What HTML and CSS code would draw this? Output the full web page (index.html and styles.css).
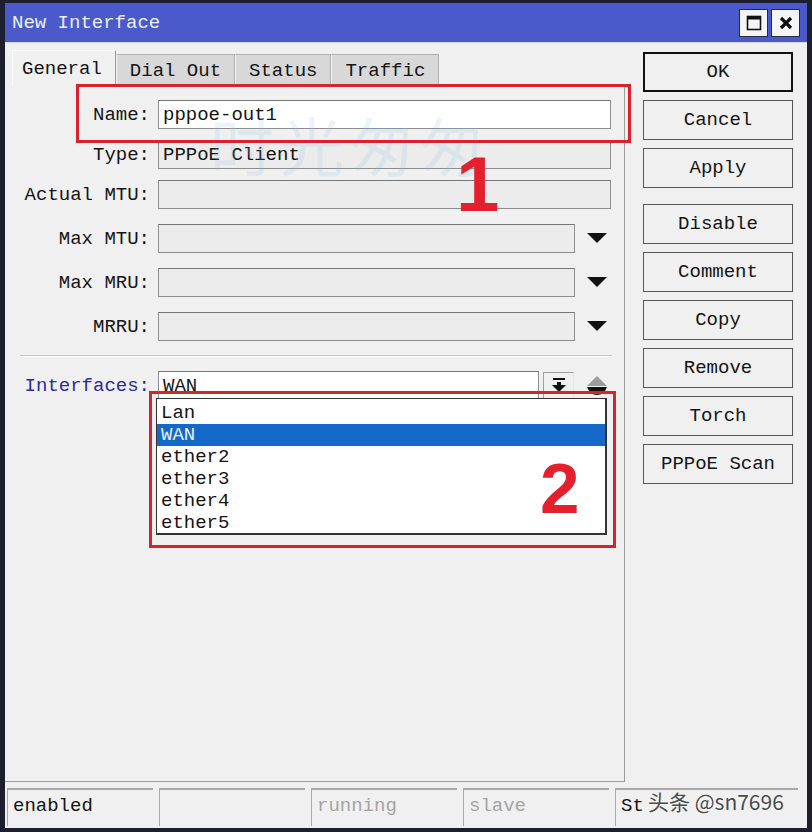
FILE: index.html
```html
<!DOCTYPE html>
<html>
<head>
<meta charset="utf-8">
<link rel="stylesheet" href="styles.css">
</head>
<body>
<div class="window">
  <div class="titlebar">
    <span class="title">New Interface</span>
    <div class="tb-buttons">
      <span class="tb-btn"><svg width="16" height="16" viewBox="0 0 16 16"><rect x="1.5" y="1.5" width="13" height="13" fill="none" stroke="#111" stroke-width="1.6"/><rect x="1" y="1" width="14" height="3.5" fill="#111"/></svg></span>
      <span class="tb-btn"><svg width="16" height="16" viewBox="0 0 16 16"><path d="M3 3 L13 13 M13 3 L3 13" stroke="#111" stroke-width="3.2" fill="none"/></svg></span>
    </div>
  </div>
  <div class="body">
    <div class="main">
      <div class="tabs">
        <div class="tab active">General</div>
        <div class="tab">Dial Out</div>
        <div class="tab">Status</div>
        <div class="tab">Traffic</div>
      </div>
      <div class="panel">
        <div class="row">
          <span class="label">Name:</span>
          <span class="field w-full white">pppoe-out1</span>
        </div>
        <div class="row">
          <span class="label">Type:</span>
          <span class="field w-full">PPPoE Client</span>
        </div>
        <div class="row">
          <span class="label">Actual MTU:</span>
          <span class="field w-full"></span>
        </div>
        <div class="row drop">
          <span class="label">Max MTU:</span>
          <span class="field w-short"></span>
          <span class="arrow"><svg width="20" height="11" viewBox="0 0 20 11"><polygon points="0,0 20,0 10,10" fill="#111"/></svg></span>
        </div>
        <div class="row drop">
          <span class="label">Max MRU:</span>
          <span class="field w-short"></span>
          <span class="arrow"><svg width="20" height="11" viewBox="0 0 20 11"><polygon points="0,0 20,0 10,10" fill="#111"/></svg></span>
        </div>
        <div class="row drop">
          <span class="label">MRRU:</span>
          <span class="field w-short"></span>
          <span class="arrow"><svg width="20" height="11" viewBox="0 0 20 11"><polygon points="0,0 20,0 10,10" fill="#111"/></svg></span>
        </div>
        <div class="sep"></div>
        <div class="row iface">
          <span class="label blue">Interfaces:</span>
          <span class="field w-iface white">WAN</span>
          <span class="iface-btn"><svg width="16" height="15" viewBox="0 0 16 15"><rect x="2" y="0" width="12" height="2" fill="#111"/><rect x="6" y="4" width="4" height="4" fill="#111"/><polygon points="1,7 15,7 8,14" fill="#111"/></svg></span>
          <span class="spin"><svg width="20" height="20" viewBox="0 0 20 20"><polygon points="10,0 20,10 0,10" fill="#9c9c9c"/><path d="M0 11 H20 Q17 19 10 19 Q3 19 0 11Z" fill="#111"/></svg></span>
          <div class="dropdown">
            <div class="opt">Lan</div>
            <div class="opt sel">WAN</div>
            <div class="opt">ether2</div>
            <div class="opt">ether3</div>
            <div class="opt">ether4</div>
            <div class="opt">ether5</div>
          </div>
        </div>
      </div>
    </div>
    <div class="side">
      <div class="btn default">OK</div>
      <div class="btn">Cancel</div>
      <div class="btn">Apply</div>
      <div class="btn gap">Disable</div>
      <div class="btn">Comment</div>
      <div class="btn">Copy</div>
      <div class="btn">Remove</div>
      <div class="btn">Torch</div>
      <div class="btn">PPPoE Scan</div>
    </div>
  </div>
  <div class="statusbar">
    <div class="cell">enabled</div>
    <div class="cell"></div>
    <div class="cell dim">running</div>
    <div class="cell dim">slave</div>
    <div class="cell">St</div>
  </div>

  <div class="ghost">时光匆匆</div>
  <div class="mark box1"></div>
  <div class="mark box2"></div>
  <div class="num num1">1</div>
  <div class="num num2">2</div>
  <div class="credit">头条 @sn7696</div>
</div>
</body>
</html>
```
FILE: styles.css
```css
* { box-sizing: border-box; }
html, body { margin: 0; padding: 0; }
body {
  width: 812px;
  height: 832px;
  overflow: hidden;
  background: #1d1f2e;
  font-family: "Liberation Mono", "Courier New", monospace;
  font-size: 19px;
  color: #141414;
}
.window {
  position: relative;
  width: 812px;
  height: 832px;
  display: flex;
  flex-direction: column;
  background: #f0f0f0;
  border-style: solid;
  border-color: #1d1f2e;
  border-width: 3px 5px 4px 5px;
}
.titlebar {
  height: 40px;
  flex: none;
  background: #4a5acb;
  border-bottom: 1px solid #d6daf0;
  display: flex;
  align-items: center;
  justify-content: space-between;
  padding: 0 7px 0 7px;
}
.title { color: #eceef8; font-size: 19px; }
.tb-buttons { display: flex; gap: 3px; }
.tb-btn {
  width: 29px;
  height: 28px;
  background: #f4f4f6;
  border: 1px solid #2a2a3a;
  display: flex;
  align-items: center;
  justify-content: center;
}
.body { flex: 1; display: flex; min-height: 0; }
.main {
  width: 620px;
  flex: none;
  display: flex;
  flex-direction: column;
  padding-top: 7px;
  padding-bottom: 6px;
}
.tabs { display: flex; align-items: flex-end; height: 36px; padding-left: 7px; flex: none; }
.tab {
  height: 32px;
  padding: 0 13px;
  display: flex;
  align-items: center;
  background: #d8d8d8;
  border: 1px solid #b2b2b2;
  border-bottom: none;
  border-left-color: #f2f2f2;
}
.tab.active {
  height: 36px;
  background: #f0f0f0;
  border-color: #ffffff #9a9a9a #ffffff #ffffff;
  padding: 0 13px 0 9px;
}
.panel {
  flex: 1;
  position: relative;
  display: flex;
  flex-direction: column;
  border-right: 1px solid #9c9c9c;
  border-bottom: 1px solid #9c9c9c;
  padding-top: 14px;
}
.row {
  display: flex;
  align-items: center;
  height: 29px;
  flex: none;
  margin-bottom: 11px;
  position: relative;
}
.row.drop { margin-top: 4px; }
.label { width: 145px; text-align: right; margin-right: 8px; white-space: nowrap; }
.label.blue { color: #2b2ba0; }
.field {
  height: 29px;
  border: 1px solid #8e8e8e;
  border-top-color: #777;
  background: #ececec;
  padding: 0 4px;
  display: flex;
  align-items: center;
  white-space: nowrap;
}
.field.white { background: #ffffff; }
.w-full { width: 453px; }
.w-short { width: 417px; }
.w-iface { width: 381px; }
.arrow { width: 44px; display: flex; justify-content: center; }
.sep {
  height: 2px;
  flex: none;
  margin: 3px 12px 0 15px;
  border-top: 1px solid #c4c4c4;
  border-bottom: 1px solid #ffffff;
}
.row.iface { margin-top: 14px; }
.iface-btn {
  width: 31px;
  height: 28px;
  margin-left: 4px;
  border: 1px solid #a0a0a0;
  border-right-color: #e8e8e8;
  border-bottom-color: #e8e8e8;
  display: flex;
  align-items: center;
  justify-content: center;
}
.spin { width: 46px; display: flex; justify-content: center; }
.dropdown {
  position: absolute;
  left: 151px;
  top: 27px;
  width: 451px;
  height: 137px;
  background: #ffffff;
  border: 1px solid #333;
  border-right-width: 2px;
  border-bottom-width: 2px;
  padding-top: 3px;
  z-index: 2;
}
.opt { height: 22px; line-height: 22px; padding-left: 4px; }
.opt.sel { background: #1468c8; color: #e4eeff; }
.side {
  flex: 1;
  display: flex;
  flex-direction: column;
  gap: 8px;
  padding: 9px 0 0 18px;
}
.btn {
  width: 150px;
  height: 40px;
  flex: none;
  border: 1px solid #555;
  background: #f0f0f0;
  display: flex;
  align-items: center;
  justify-content: center;
}
.btn.default { border: 2px solid #111; }
.btn.gap { margin-top: 8px; }
.statusbar {
  height: 40px;
  flex: none;
  display: grid;
  grid-template-columns: 146px 146px 146px 146px 1fr;
  column-gap: 6px;
  padding: 0 9px 2px 2px;
}
.cell {
  border-top: 2px solid #a8a8a8;
  border-left: 1px solid #a8a8a8;
  padding: 0 0 4px 5px;
  display: flex;
  align-items: center;
}
.cell.dim { color: #a4a4a4; }
.ghost {
  position: absolute;
  left: 205px;
  top: 94px;
  font-family: "Noto Sans CJK SC", sans-serif;
  font-size: 64px;
  letter-spacing: 6px;
  color: rgba(120, 190, 230, 0.16);
  z-index: 3;
  pointer-events: none;
}
.mark {
  position: absolute;
  border: 3px solid #d6242c;
  z-index: 4;
}
.box1 { left: 71px; top: 81px; width: 555px; height: 59px; }
.box2 { left: 144px; top: 388px; width: 467px; height: 157px; }
.num {
  position: absolute;
  font-family: "Liberation Sans", Arial, sans-serif;
  font-weight: bold;
  line-height: 1;
  color: #e3202b;
  z-index: 4;
}
.num1 { left: 451px; top: 142px; font-size: 78px; }
.num2 { left: 535px; top: 450px; font-size: 71px; }
.credit {
  position: absolute;
  left: 643px;
  top: 783px;
  font-family: "Noto Sans CJK SC", "Noto Sans", sans-serif;
  font-size: 21px;
  color: #4a4a4a;
  text-shadow: 0 0 2px #fff;
  z-index: 5;
}
```
